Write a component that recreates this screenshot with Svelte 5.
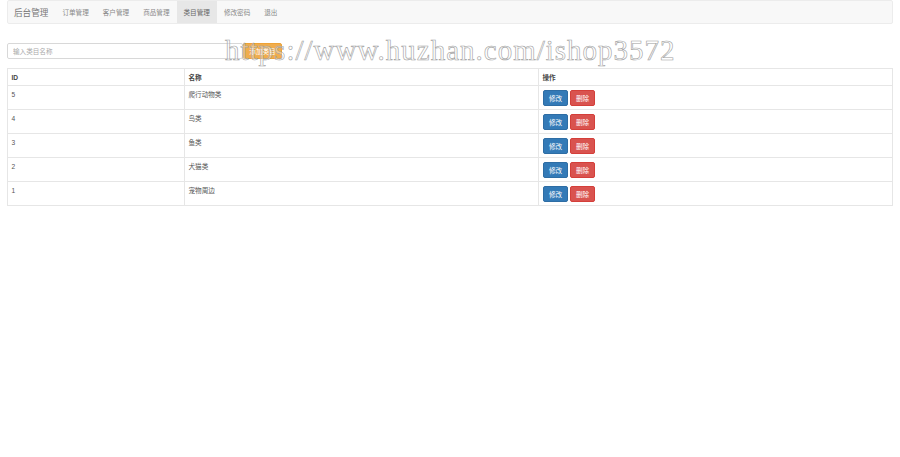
<script>
	const navItems = [
		{ label: '订单管理' },
		{ label: '客户管理' },
		{ label: '商品管理' },
		{ label: '类目管理', active: true },
		{ label: '修改密码' },
		{ label: '退出' }
	];

	const categories = [
		{ id: 5, name: '爬行动物类' },
		{ id: 4, name: '鸟类' },
		{ id: 3, name: '鱼类' },
		{ id: 2, name: '犬猫类' },
		{ id: 1, name: '宠物周边' }
	];
</script>

<div class="page">
	<nav class="navbar">
		<span class="brand">后台管理</span>
		<ul class="nav">
			{#each navItems as item}
				<li class:active={item.active}>{item.label}</li>
			{/each}
		</ul>
	</nav>

	<form class="search-form">
		<input type="text" placeholder="输入类目名称" />
		<button type="button" class="btn btn-warning">添加类目</button>
	</form>

	<table>
		<thead>
			<tr>
				<th class="col-id">ID</th>
				<th class="col-name">名称</th>
				<th>操作</th>
			</tr>
		</thead>
		<tbody>
			{#each categories as cat}
				<tr>
					<td>{cat.id}</td>
					<td>{cat.name}</td>
					<td class="actions-cell">
						<div class="actions">
							<button type="button" class="btn btn-primary">修改</button>
							<button type="button" class="btn btn-danger">删除</button>
						</div>
					</td>
				</tr>
			{/each}
		</tbody>
	</table>

	<div class="watermark">https://www.huzhan.com/ishop3572</div>
</div>

<style>
	:global(body) {
		margin: 0;
		background: #fff;
		font-family: 'Liberation Sans', 'Noto Sans CJK SC', sans-serif;
		font-size: 7px;
		color: #555;
	}

	.page {
		position: relative;
		height: 457px;
		overflow: hidden;
		padding: 0 7px;
		box-sizing: border-box;
	}

	.navbar {
		display: flex;
		align-items: stretch;
		height: 24px;
		box-sizing: border-box;
		background: #f8f8f8;
		border: 1px solid #ececec;
		border-radius: 2px;
	}

	.brand {
		display: flex;
		align-items: center;
		padding: 0 7px 0 6px;
		font-size: 8.6px;
		color: #777;
	}

	.nav {
		display: flex;
		margin: 0;
		padding: 0;
		list-style: none;
	}

	.nav li {
		display: flex;
		align-items: center;
		padding: 0 7px;
		color: #888;
		font-size: 6.6px;
	}

	.nav li.active {
		background: #e7e7e7;
		color: #666;
	}

	.search-form {
		display: flex;
		margin: 19px 0 9px;
		height: 16px;
	}

	input {
		width: 236px;
		height: 16px;
		box-sizing: border-box;
		padding: 0 5px;
		border: 1px solid #d8d8d8;
		border-radius: 2px;
		font: inherit;
		font-size: 6.6px;
	}

	input::placeholder {
		color: #aaa;
		opacity: 1;
	}

	.btn {
		border: 1px solid transparent;
		border-radius: 2px;
		padding: 0;
		color: #fff;
		font: inherit;
		font-size: 6.6px;
		height: 16px;
	}

	.btn-warning {
		width: 39px;
		background: #f0ad4e;
		border-color: #eea236;
	}

	.btn-primary {
		width: 25px;
		background: #337ab7;
		border-color: #2e6da4;
	}

	.btn-danger {
		width: 25px;
		background: #d9534f;
		border-color: #d43f3a;
	}

	table {
		width: 886px;
		table-layout: fixed;
		border-collapse: collapse;
		border: 1px solid #e6e6e6;
		font-size: 6.6px;
	}

	th,
	td {
		border: 1px solid #e6e6e6;
		padding: 4px 3.5px;
		text-align: left;
		vertical-align: top;
		line-height: 9px;
	}

	th {
		height: 9px;
		padding-bottom: 3px;
		color: #444;
		font-weight: bold;
	}

	td {
		height: 15px;
	}

	.actions-cell {
		padding: 4px 4px 3px;
	}

	.col-id {
		width: 169px;
	}

	.col-name {
		width: 346px;
	}

	.actions {
		display: flex;
		gap: 2px;
	}

	.watermark {
		position: absolute;
		left: 225px;
		top: 34px;
		font-family: 'Liberation Serif', serif;
		font-size: 29px;
		letter-spacing: 1px;
		white-space: nowrap;
		color: rgba(255, 255, 255, 0.35);
		-webkit-text-stroke: 0.6px #a0a0a0;
		pointer-events: none;
	}
</style>
